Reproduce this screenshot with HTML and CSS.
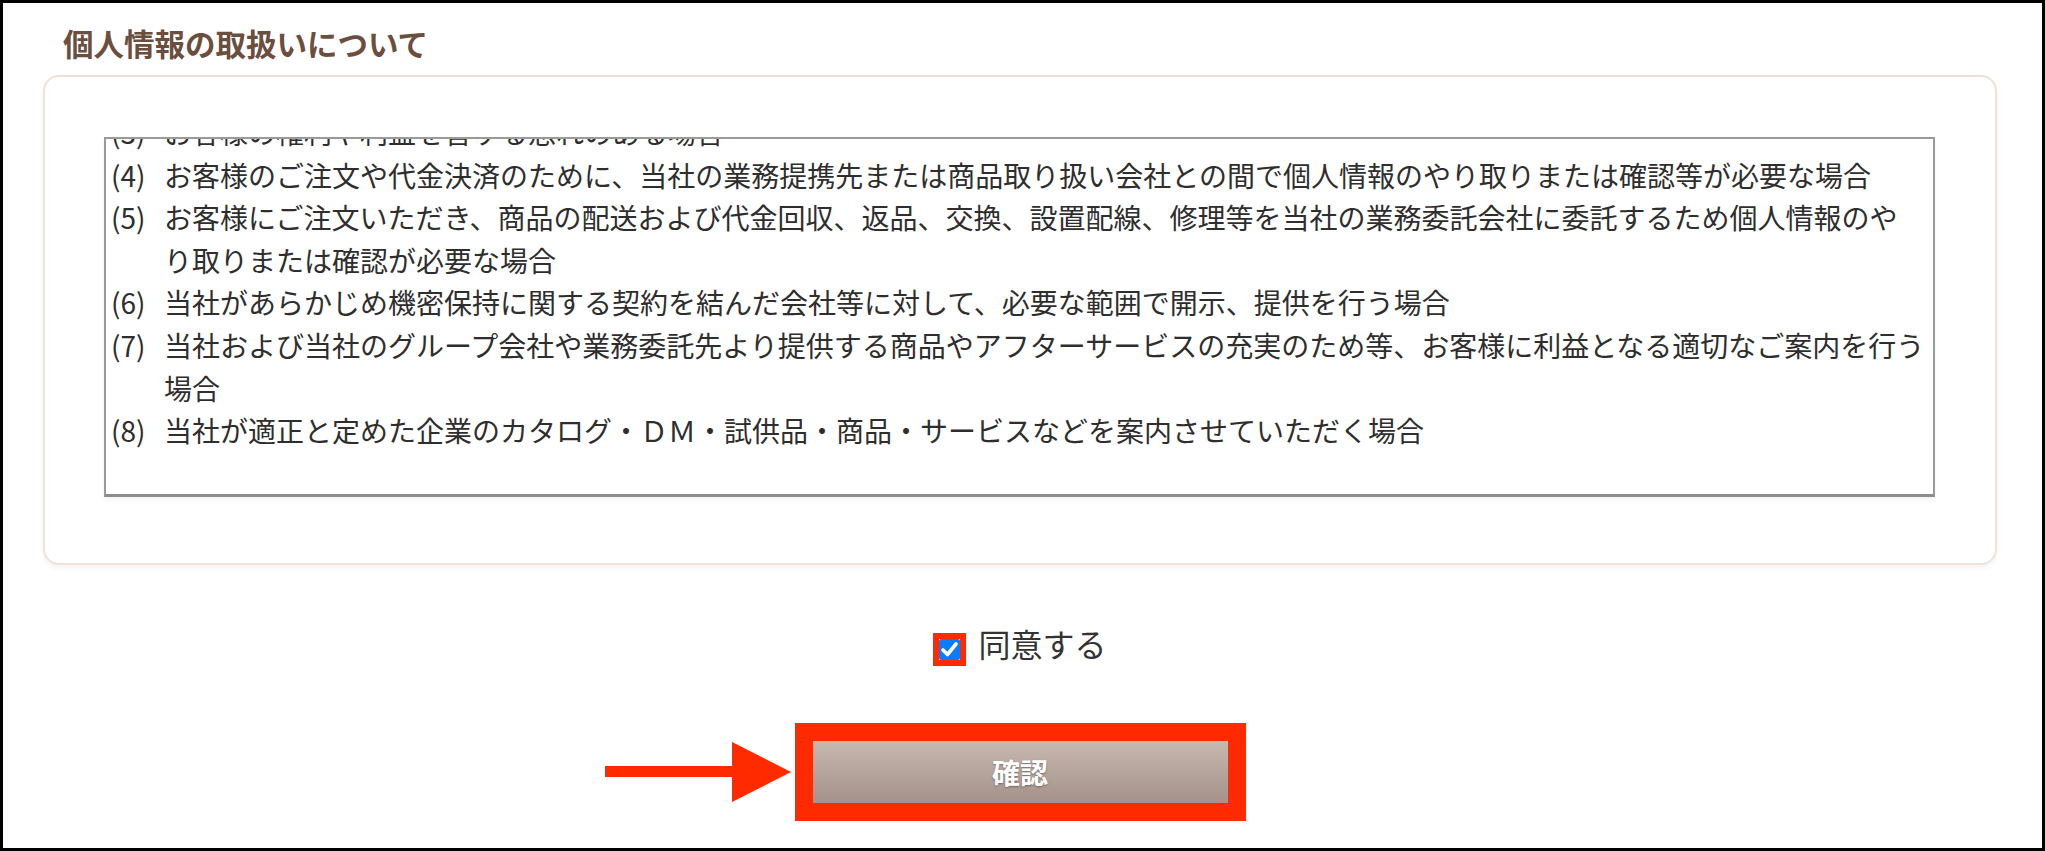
FILE: index.html
```html
<!DOCTYPE html>
<html lang="ja">
<head>
    <meta charset="UTF-8">
    <meta name="viewport" content="width=device-width, initial-scale=1.0">
    <title>個人情報の取扱いについて</title>
    <link rel="stylesheet" href="styles.css">
</head>
<body>
    <div class="screen">
        <h2 class="title">個人情報の取扱いについて</h2>
        <div class="card">
            <div class="policy">
                <ul class="policy-list">
                    <li><span class="num">(3)</span><span class="txt">お客様の権利や利益を害する恐れのある場合</span></li>
                    <li><span class="num">(4)</span><span class="txt">お客様のご注文や代金決済のために、当社の業務提携先または商品取り扱い会社との間で個人情報のやり取りまたは確認等が必要な場合</span></li>
                    <li><span class="num">(5)</span><span class="txt">お客様にご注文いただき、商品の配送および代金回収、返品、交換、設置配線、修理等を当社の業務委託会社に委託するため個人情報のや<br>り取りまたは確認が必要な場合</span></li>
                    <li><span class="num">(6)</span><span class="txt">当社があらかじめ機密保持に関する契約を結んだ会社等に対して、必要な範囲で開示、提供を行う場合</span></li>
                    <li><span class="num">(7)</span><span class="txt">当社および当社のグループ会社や業務委託先より提供する商品やアフターサービスの充実のため等、お客様に利益となる適切なご案内を行う場合</span></li>
                    <li><span class="num">(8)</span><span class="txt">当社が適正と定めた企業のカタログ・ＤＭ・試供品・商品・サービスなどを案内させていただく場合</span></li>
                </ul>
            </div>
        </div>

        <label class="agree">
            <span class="check-frame">
                <span class="check-box">
                    <svg viewBox="0 0 21 21" width="21" height="21">
                        <path d="M4 11 L8.5 15.5 L17 5" fill="none" stroke="#fff" stroke-width="3.6" stroke-linecap="round" stroke-linejoin="round"/>
                    </svg>
                </span>
            </span>
            <span class="agree-text">同意する</span>
        </label>

        <div class="submit-row">
            <div class="submit-frame">
                <svg class="arrow" viewBox="0 0 186 60" width="186" height="60">
                    <rect x="0" y="24" width="130" height="11" fill="#ff2a00"/>
                    <polygon points="127,0 186,30 127,60" fill="#ff2a00"/>
                </svg>
                <button class="submit">確認</button>
            </div>
        </div>
    </div>
</body>
</html>
```

FILE: styles.css
```css
body {
    margin: 0;
    font-family: "Noto Sans CJK JP", sans-serif;
    color: #333;
    background: #fff;
}
.screen {
    box-sizing: border-box;
    height: 851px;
    border: 3px solid #000;
    padding: 20px 45px 0 40px;
}
.title {
    margin: 0 0 12px 20px;
    font-size: 30.5px;
    line-height: 40px;
    font-weight: bold;
    color: #6a4f3f;
}
.card {
    border: 2px solid #f1e1d3;
    border-radius: 16px;
    padding: 60px 60px 66px 59px;
    box-shadow: 0 3px 5px rgba(0, 0, 0, 0.05);
}
.policy {
    box-sizing: border-box;
    height: 360px;
    border: 2px solid #9a9a9a;
    border-bottom: 3px solid #8c8c8c;
    padding: 0 4px 0 5px;
    overflow: hidden;
    box-shadow: 0 3px 4px rgba(0, 0, 0, 0.05);
}
.policy-list {
    list-style: none;
    margin: -28px 0 0;
    padding: 0;
    font-size: 28px;
    line-height: 42.6px;
    color: #2e2e2e;
}
.policy-list li {
    display: flex;
}
.policy-list .num {
    flex: 0 0 53px;
}
.policy-list .txt {
    flex: 1;
}
.agree {
    display: flex;
    justify-content: center;
    align-items: center;
    gap: 12px;
    margin-top: 55px;
    cursor: pointer;
}
.check-frame {
    display: flex;
    border: 6px solid #ff2a00;
    margin-top: 13px;
}
.check-box {
    display: flex;
    width: 21px;
    height: 21px;
    background: #0b7bff;
    border-radius: 2px;
}
.agree-text {
    font-size: 32px;
    line-height: 40px;
    color: #333;
}
.submit-row {
    display: flex;
    justify-content: center;
    margin-top: 57px;
}
.submit-frame {
    position: relative;
    border: 18px solid #ff2a00;
}
.arrow {
    position: absolute;
    right: calc(100% + 22px);
    top: 1px;
}
.submit {
    display: block;
    width: 415px;
    height: 62px;
    border: 0;
    background: linear-gradient(#c7b8b0, #a4928a);
    color: #fff;
    font-family: "Noto Sans CJK JP", sans-serif;
    font-size: 28px;
    font-weight: bold;
    text-shadow: 0 1px 2px rgba(0, 0, 0, 0.35);
    cursor: pointer;
}
```
